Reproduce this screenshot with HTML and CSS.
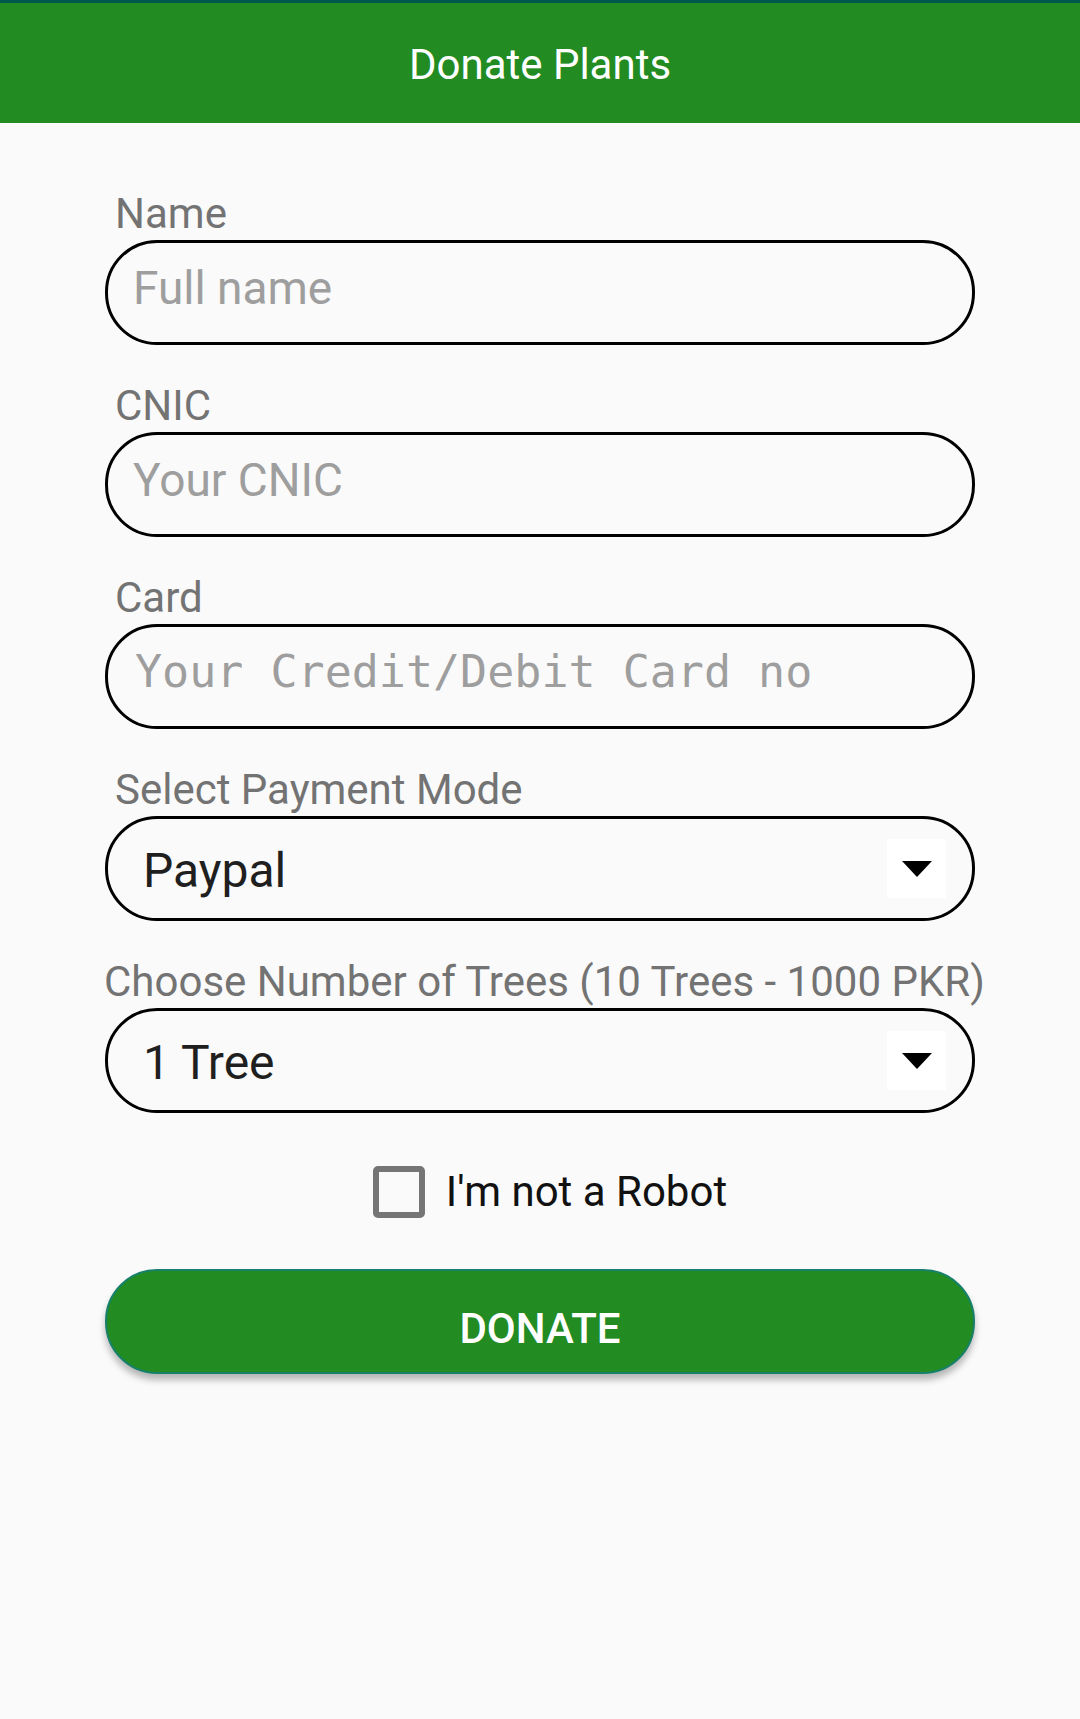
FILE: index.html
```html
<!DOCTYPE html>
<html lang="en">
<head>
<meta charset="utf-8">
<title>Donate Plants</title>
<link rel="stylesheet" href="styles.css">
</head>
<body>
<header class="appbar">
  <h1 class="appbar-title">Donate Plants</h1>
</header>
<main class="form">
  <div class="field">
    <label class="label">Name</label>
    <input class="input" type="text" placeholder="Full name">
  </div>
  <div class="field">
    <label class="label">CNIC</label>
    <input class="input" type="text" placeholder="Your CNIC">
  </div>
  <div class="field">
    <label class="label">Card</label>
    <input class="input input-mono" type="text" placeholder="Your Credit/Debit Card no">
  </div>
  <div class="field">
    <label class="label">Select Payment Mode</label>
    <div class="spinner">
      <span class="spinner-value">Paypal</span>
      <span class="spinner-arrow"><span class="tri"></span></span>
    </div>
  </div>
  <div class="field">
    <label class="label label-wide">Choose Number of Trees (10 Trees - 1000 PKR)</label>
    <div class="spinner">
      <span class="spinner-value">1 Tree</span>
      <span class="spinner-arrow"><span class="tri"></span></span>
    </div>
  </div>
  <div class="check-row">
    <span class="checkbox"></span>
    <span class="check-text">I'm not a Robot</span>
  </div>
  <button class="donate" type="button">Donate</button>
</main>
</body>
</html>
```
FILE: styles.css
```css
html, body {
  margin: 0;
  padding: 0;
}
body {
  background: #fafafa;
  font-family: Roboto, "Noto Sans", "Liberation Sans", sans-serif;
  width: 1080px;
  min-height: 1719px;
}
.appbar {
  box-sizing: border-box;
  height: 123px;
  background: #228b22;
  border-top: 3px solid #00574b;
  padding-top: 4px;
  display: flex;
  align-items: center;
  justify-content: center;
}
.appbar-title {
  margin: 0;
  font-weight: 400;
  font-size: 42px;
  line-height: 50px;
  color: #ffffff;
}
.form {
  width: 870px;
  margin: 0 auto;
  padding-top: 66px;
  display: flex;
  flex-direction: column;
}
.field {
  display: flex;
  flex-direction: column;
  margin-bottom: 36px;
}
.label {
  font-size: 42px;
  line-height: 50px;
  height: 51px;
  color: #737373;
  padding-left: 10px;
  white-space: nowrap;
}
.label-wide {
  padding-left: 0;
  margin-left: -1px;
}
.input {
  box-sizing: border-box;
  height: 105px;
  width: 100%;
  margin: 0;
  border: 3px solid #000;
  border-radius: 52px;
  background: transparent;
  padding: 0 24px 10px 25px;
  font-family: Roboto, "Noto Sans", sans-serif;
  font-size: 46px;
  color: #212121;
  outline: none;
}
.input::placeholder {
  color: #9e9e9e;
  opacity: 1;
}
.input-mono {
  font-family: "DejaVu Sans Mono", "Liberation Mono", monospace;
  font-size: 45px;
  padding-left: 27px;
}
.spinner {
  box-sizing: border-box;
  height: 105px;
  border: 3px solid #000;
  border-radius: 52px;
  display: flex;
  align-items: center;
  justify-content: space-between;
  padding: 0 26px 0 35px;
}
.spinner-value {
  font-size: 48px;
  color: #1f1f1f;
  line-height: 56px;
  padding-top: 4px;
}
.spinner-arrow {
  width: 59px;
  height: 59px;
  background: #ffffff;
  display: flex;
  align-items: center;
  justify-content: center;
}
.tri {
  width: 0;
  height: 0;
  border-left: 15px solid transparent;
  border-right: 15px solid transparent;
  border-top: 16px solid #000;
}
.check-row {
  display: flex;
  align-items: center;
  justify-content: center;
  padding-left: 20px;
  margin-top: 17px;
  height: 52px;
  gap: 21px;
}
.checkbox {
  box-sizing: border-box;
  width: 52px;
  height: 52px;
  border: 6px solid #757575;
  border-radius: 5px;
}
.check-text {
  font-size: 42px;
  color: #111;
  line-height: 50px;
}
.donate {
  margin-top: 51px;
  height: 105px;
  width: 100%;
  box-sizing: border-box;
  background: #228b22;
  border: 2px solid #16806a;
  border-radius: 52px;
  color: #fff;
  font-family: Roboto, "Noto Sans", sans-serif;
  font-weight: 500;
  font-size: 42px;
  text-transform: uppercase;
  box-shadow: 0 6px 7px rgba(0, 0, 0, 0.28);
  padding: 14px 0 0 0;
}
```
